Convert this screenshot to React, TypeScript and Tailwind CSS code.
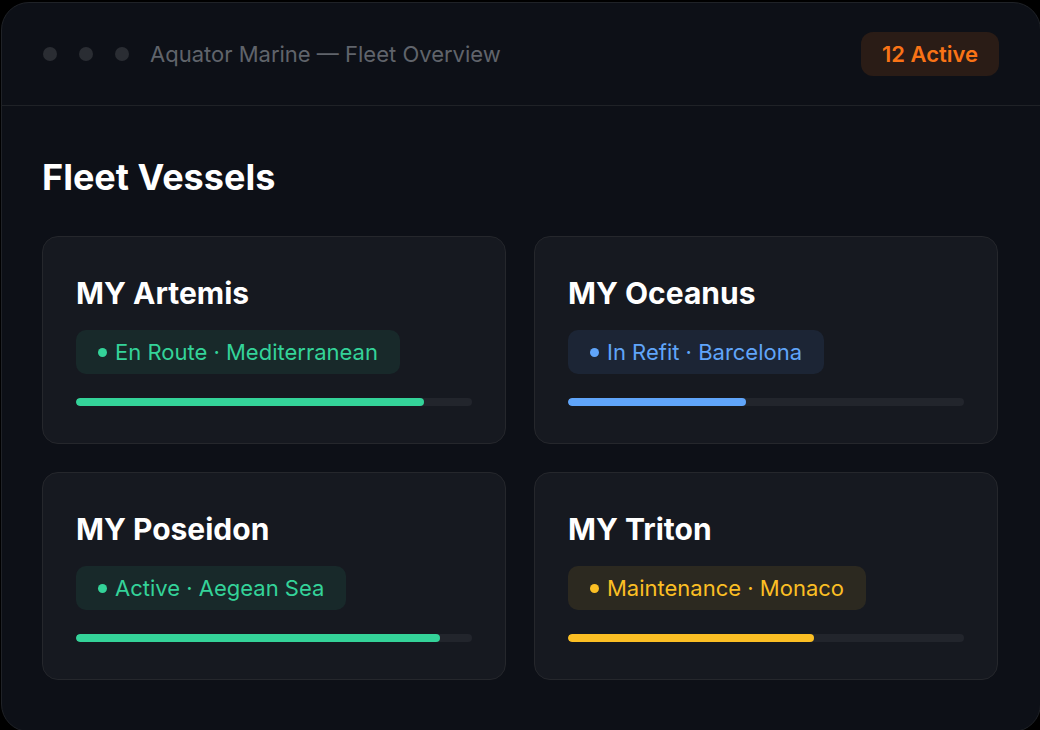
const vessels = [
  { name: "MY Artemis", status: "En Route · Mediterranean", tone: "green", pct: 88 },
  { name: "MY Oceanus", status: "In Refit · Barcelona", tone: "blue", pct: 45 },
  { name: "MY Poseidon", status: "Active · Aegean Sea", tone: "green", pct: 92 },
  { name: "MY Triton", status: "Maintenance · Monaco", tone: "amber", pct: 62 },
];

const tones: Record<string, { pill: string; text: string; dot: string; bar: string }> = {
  green: { pill: "bg-[#18292a]", text: "text-[#34d399]", dot: "bg-[#34d399]", bar: "bg-[#34d399]" },
  blue: { pill: "bg-[#1c2535]", text: "text-[#60a5fa]", dot: "bg-[#60a5fa]", bar: "bg-[#60a5fa]" },
  amber: { pill: "bg-[#2c2920]", text: "text-[#fbbf24]", dot: "bg-[#fbbf24]", bar: "bg-[#fbbf24]" },
};

export default function App() {
  return (
    <div className="w-[1040px] h-[730px] bg-black pt-[2px] pl-[1px]" style={{ fontFamily: "Inter, 'Noto Sans', sans-serif" }}>
      <div className="h-[730px] w-[1040px] rounded-[28px] border border-[#1f2227] bg-[#0d1017] overflow-hidden">
        <header className="h-[103px] border-b border-[#1f2227] pl-[41px] pr-[41px] flex items-center justify-between">
          <div className="flex items-center gap-[22px]">
            <span className="w-[14px] h-[14px] rounded-full bg-[#2a2d33]" />
            <span className="w-[14px] h-[14px] rounded-full bg-[#2a2d33]" />
            <span className="w-[14px] h-[14px] rounded-full bg-[#2a2d33]" />
            <span className="-ml-[1px] text-[22px] text-[#60646b]">Aquator Marine — Fleet Overview</span>
          </div>
          <span className="h-[44px] px-[21px] rounded-[12px] bg-[#2a1c16] text-[#f97316] text-[22px] font-semibold flex items-center">
            12 Active
          </span>
        </header>

        <main className="pl-[40px] pr-[41px] pt-[49px]">
          <h1 className="text-[36px] leading-[44px] font-bold text-white mb-[37px]">Fleet Vessels</h1>
          <div className="grid grid-cols-[464px_464px] gap-[28px]">
            {vessels.map((v) => {
              const t = tones[v.tone];
              return (
                <div key={v.name} className="rounded-[16px] border border-[#25272c] bg-[#161920] px-[33px] pt-[38px] pb-[37px]">
                  <h2 className="text-[30px] leading-[36px] font-bold text-white mb-[19px]">{v.name}</h2>
                  <div className={`inline-flex items-center h-[44px] px-[22px] rounded-[10px] ${t.pill}`}>
                    <span className={`w-[9px] h-[9px] rounded-full mr-[8px] ${t.dot}`} />
                    <span className={`text-[22px] ${t.text}`}>{v.status}</span>
                  </div>
                  <div className="mt-[24px] h-[8px] rounded-full bg-[#22252c] overflow-hidden">
                    <div className={`h-full rounded-full ${t.bar}`} style={{ width: `${v.pct}%` }} />
                  </div>
                </div>
              );
            })}
          </div>
        </main>
      </div>
    </div>
  );
}
